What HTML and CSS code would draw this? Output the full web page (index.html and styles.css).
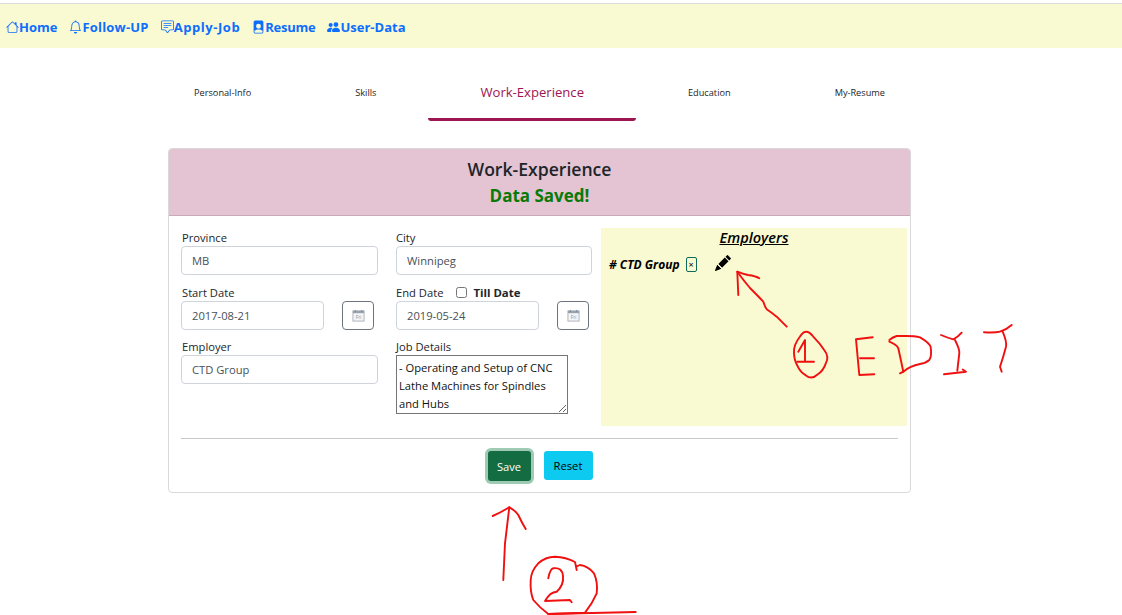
FILE: index.html
```html
<!DOCTYPE html>
<html lang="en">
<head>
<meta charset="utf-8">
<title>Work-Experience</title>
<link rel="stylesheet" href="styles.css">
</head>
<body>
<nav class="topnav">
  <a class="navlink" href="#"><svg class="navicon" viewBox="0 0 16 16"><path fill-rule="evenodd" d="M2 13.5V7h1v6.5a.5.5 0 0 0 .5.5h9a.5.5 0 0 0 .5-.5V7h1v6.5a1.5 1.5 0 0 1-1.5 1.5h-9A1.5 1.5 0 0 1 2 13.5zm11-11V6l-2-2V2.5a.5.5 0 0 1 .5-.5h1a.5.5 0 0 1 .5.5z"/><path fill-rule="evenodd" d="M7.293 1.5a1 1 0 0 1 1.414 0l6.647 6.646a.5.5 0 0 1-.708.708L8 2.207 1.354 8.854a.5.5 0 1 1-.708-.708L7.293 1.5z"/></svg>Home</a>
  <a class="navlink navlink-follow" href="#"><svg class="navicon" viewBox="0 0 16 16"><path d="M8 16a2 2 0 0 0 2-2H6a2 2 0 0 0 2 2zM8 1.918l-.797.161A4.002 4.002 0 0 0 4 6c0 .628-.134 2.197-.459 3.742-.16.767-.376 1.566-.663 2.258h10.244c-.287-.692-.502-1.49-.663-2.258C12.134 8.197 12 6.628 12 6a4.002 4.002 0 0 0-3.203-3.92L8 1.917zM14.22 12c.223.447.481.801.78 1H1c.299-.199.557-.553.78-1C2.68 10.2 3 6.88 3 6c0-2.42 1.72-4.44 4.005-4.901a1 1 0 1 1 1.99 0A5.002 5.002 0 0 1 13 6c0 .88.32 4.2 1.22 6z"/></svg>Follow-UP</a>
  <a class="navlink navlink-apply" href="#"><svg class="navicon" viewBox="0 0 16 16"><path d="M14 1a1 1 0 0 1 1 1v8a1 1 0 0 1-1 1h-2.5a2 2 0 0 0-1.6.8L8 14.333 6.1 11.8a2 2 0 0 0-1.6-.8H2a1 1 0 0 1-1-1V2a1 1 0 0 1 1-1h12zM2 0a2 2 0 0 0-2 2v8a2 2 0 0 0 2 2h2.5a1 1 0 0 1 .8.4l1.9 2.533a1 1 0 0 0 1.6 0l1.9-2.533a1 1 0 0 1 .8-.4H14a2 2 0 0 0 2-2V2a2 2 0 0 0-2-2H2z"/><path d="M3 3.5a.5.5 0 0 1 .5-.5h9a.5.5 0 0 1 0 1h-9a.5.5 0 0 1-.5-.5zM3 6a.5.5 0 0 1 .5-.5h9a.5.5 0 0 1 0 1h-9A.5.5 0 0 1 3 6zm0 2.5a.5.5 0 0 1 .5-.5h5a.5.5 0 0 1 0 1h-5a.5.5 0 0 1-.5-.5z"/></svg>Apply-Job</a>
  <a class="navlink navlink-resume" href="#"><svg class="navicon" viewBox="0 0 16 16"><path d="M12 0H4a2 2 0 0 0-2 2v12a2 2 0 0 0 2 2h8a2 2 0 0 0 2-2V2a2 2 0 0 0-2-2zm-1 7a3 3 0 1 1-6 0 3 3 0 0 1 6 0zm-3 4c2.623 0 4.146.826 5 1.755V14a1 1 0 0 1-1 1H4a1 1 0 0 1-1-1v-1.245C3.854 11.825 5.377 11 8 11z"/></svg>Resume</a>
  <a class="navlink" href="#"><svg class="navicon" viewBox="0 0 16 16"><path d="M7 14s-1 0-1-1 1-4 5-4 5 3 5 4-1 1-1 1H7zm4-6a3 3 0 1 0 0-6 3 3 0 0 0 0 6z"/><path d="M5.216 14A2.238 2.238 0 0 1 5 13c0-1.355.68-2.75 1.936-3.72A6.325 6.325 0 0 0 5 9c-4 0-5 3-5 4s1 1 1 1h4.216z"/><path d="M4.5 8a2.5 2.5 0 1 0 0-5 2.5 2.5 0 0 0 0 5z"/></svg>User-Data</a>
</nav>

<main class="page">
  <div class="tabs">
    <a class="tab" href="#">Personal-Info</a>
    <a class="tab" href="#">Skills</a>
    <a class="tab tab-active" href="#">Work-Experience</a>
    <a class="tab" href="#">Education</a>
    <a class="tab" href="#">My-Resume</a>
  </div>

  <section class="card">
    <header class="card-head">
      <h2 class="card-title">Work-Experience</h2>
      <p class="card-status">Data Saved!</p>
    </header>
    <div class="card-body">
      <div class="form-grid">
        <div class="fields">
          <div class="field">
            <label class="label">Province</label>
            <input class="input" value="MB">
          </div>
          <div class="field field-right">
            <label class="label">City</label>
            <input class="input" value="Winnipeg">
          </div>
          <div class="field">
            <label class="label">Start Date</label>
            <div class="date-row">
              <input class="input input-date" value="2017-08-21">
              <button class="cal-btn" type="button"><svg class="cal-icon" viewBox="0 0 14 14"><rect x="1" y="2" width="12" height="11" fill="#f4f5f7" stroke="#aab2bb"/><rect x="1" y="2" width="12" height="2.5" fill="#98a2ae"/><rect x="3" y="1" width="1" height="2" fill="#7b8693"/><rect x="10" y="1" width="1" height="2" fill="#7b8693"/><text class="cal-text" x="7" y="10.8" text-anchor="middle">Fri</text></svg></button>
            </div>
          </div>
          <div class="field field-right">
            <div class="label-row">
              <label class="label">End Date</label>
              <input class="check" type="checkbox">
              <strong class="till">Till Date</strong>
            </div>
            <div class="date-row">
              <input class="input input-date" value="2019-05-24">
              <button class="cal-btn" type="button"><svg class="cal-icon" viewBox="0 0 14 14"><rect x="1" y="2" width="12" height="11" fill="#f4f5f7" stroke="#aab2bb"/><rect x="1" y="2" width="12" height="2.5" fill="#98a2ae"/><rect x="3" y="1" width="1" height="2" fill="#7b8693"/><rect x="10" y="1" width="1" height="2" fill="#7b8693"/><text class="cal-text" x="7" y="10.8" text-anchor="middle">Fri</text></svg></button>
            </div>
          </div>
          <div class="field">
            <label class="label">Employer</label>
            <input class="input" value="CTD Group">
          </div>
          <div class="field field-right">
            <label class="label">Job Details</label>
            <textarea class="details">- Operating and Setup of CNC Lathe Machines for Spindles and Hubs</textarea>
          </div>
        </div>
        <aside class="employers">
          <h3 class="employers-title">Employers</h3>
          <div class="employer">
            <span class="employer-name"># CTD Group</span>
            <span class="remove">×</span>
            <svg class="pencil" viewBox="0 0 16 16"><path d="M12.854.146a.5.5 0 0 0-.707 0L10.5 1.793 14.207 5.5l1.647-1.646a.5.5 0 0 0 0-.708l-3-3zm.646 6.061L9.793 2.5 3.293 9H3.5a.5.5 0 0 1 .5.5v.5h.5a.5.5 0 0 1 .5.5v.5h.5a.5.5 0 0 1 .5.5v.5h.5a.5.5 0 0 1 .5.5v.207l6.5-6.5zm-7.468 7.468A.5.5 0 0 1 6 13.5V13h-.5a.5.5 0 0 1-.5-.5V12h-.5a.5.5 0 0 1-.5-.5V11h-.5a.5.5 0 0 1-.5-.5V10h-.5a.499.499 0 0 1-.175-.032l-.179.178a.5.5 0 0 0-.11.168l-2 5a.5.5 0 0 0 .65.65l5-2a.5.5 0 0 0 .168-.11l.178-.178z"/></svg>
          </div>
        </aside>
      </div>
      <hr class="rule">
      <div class="actions">
        <button class="btn btn-save" type="button">Save</button>
        <button class="btn btn-reset" type="button">Reset</button>
      </div>
    </div>
  </section>
</main>

<svg class="ink" viewBox="0 0 1122 615">
  <path d="M738.3,295 L737.3,271.7 Q743,274 748,275 Q756,276 759.3,278.3"/>
  <path d="M737.3,271.7 Q744,281 750,288 Q758,296 763.3,301.7 Q765,307 766.7,309.3 Q772,313 776.7,316.7 L786.7,326.7"/>
  <path d="M813,336.3 Q820,343.3 824.2,350 Q829.5,356.7 825.8,363.4 Q823.3,371 817.5,374.5 Q811.7,380 805.9,375.4 Q800,372 797.5,365.9 Q794,360 794,352.5 Q793.5,345 800,336.5 Q806,327 813,336.3"/>
  <path d="M798.3,351.7 L805,340 L805,361"/>
  <path d="M797.3,361.7 L814,361.7"/>
  <path d="M872.7,337.3 L856,339.3 L859.3,375 L874.3,374.3"/>
  <path d="M860,358.3 L874,358.3"/>
  <path d="M889.3,340 Q893,337 896.7,336 L906,336 Q915,336 920,337.3 Q930,343 930.7,347.3 Q932,356 929.3,360 Q926,363 920,364 Q910,366 903.3,371.7 L900,373.3"/>
  <path d="M889.3,341.7 Q897,345 898.3,348.3 Q900,356 903.3,371.7"/>
  <path d="M941,335 Q948,338 953.3,339.3 Q958,337 961.7,332.7"/>
  <path d="M955,340 Q960,350 959.3,353.3 L957.3,370.7"/>
  <path d="M944,374.3 L966,371.7 L962.7,369.5"/>
  <path d="M984,332.3 Q995,333 1000,331.7 Q1006,330 1011.7,325"/>
  <path d="M1002.7,331.7 Q1007,342 1006,346.7 Q1003,358 1000,366.7 L1001.7,371.7"/>
  <path d="M503.3,580 L505,543.3 L509.3,507.3"/>
  <path d="M492.7,516 Q500,513 509.3,507.3 Q516,511 518.3,515 Q522,523 525.7,529"/>
  <path d="M576.7,570 L575,562 Q566,557 555,556.7 Q545,557 538.3,563.3 Q531,571 530.7,580 Q530,592 533.3,600 Q540,608 548.3,614 L585,612.7 Q592,604 596.7,593.3 Q598,582 594,573.3 Q588,566 580,565 L576,566.7"/>
  <path d="M548.3,578.3 Q550,569 553.3,568.3 Q562,567 563,576 Q564,585 556.7,591.7 Q550,592 545,601 L570,600 L571.7,602.3"/>
  <path d="M548.3,614 L635.7,612"/>
</svg>
</body>
</html>
```
FILE: styles.css
```css
* { box-sizing: border-box; }

html, body {
  margin: 0;
  height: 615px;
  overflow: hidden;
}

body {
  position: relative;
  background: #fff;
  color: #212529;
  font-family: "Open Sans", "Noto Sans", sans-serif;
  font-size: 12px;
  padding-top: 3px;
}

.topnav {
  display: flex;
  align-items: center;
  gap: 12px;
  height: 45px;
  padding: 2px 0 0 6px;
  background: #f9f9d2;
  border-top: 1px solid #dcdcdc;
}

.navlink {
  display: flex;
  align-items: center;
  color: #0d6efd;
  font-size: 13px;
  font-weight: 700;
  text-decoration: none;
}

.navlink-follow { letter-spacing: 0.2px; }
.navlink-apply { letter-spacing: 0.55px; }
.navlink-resume { letter-spacing: -0.25px; }

.navicon {
  width: 13px;
  height: 14px;
  fill: currentColor;
  flex: none;
}

.page {
  width: 1079px;
  display: flex;
  flex-direction: column;
  align-items: center;
}

.tabs {
  display: flex;
  height: 73px;
}

.tab {
  display: flex;
  align-items: center;
  justify-content: center;
  padding: 34px 52px 19px;
  height: 73px;
  color: #212529;
  font-size: 9.2px;
  text-decoration: none;
}

.tab-active {
  padding-top: 36px;
  color: #9c1450;
  font-size: 13.1px;
  border-bottom: 3px solid #9c1450;
  border-radius: 0 0 3px 3px;
}

.card {
  width: 743px;
  height: 345px;
  margin-top: 27px;
  border: 1px solid #d9d9d9;
  border-radius: 4px;
  overflow: hidden;
}

.card-head {
  height: 67px;
  padding-top: 8px;
  background: #e4c4d3;
  border-bottom: 1px solid #c9aaba;
  text-align: center;
}

.card-title {
  margin: 0;
  font-size: 17.6px;
  line-height: 24px;
  font-weight: 600;
}

.card-status {
  margin: 3px 0 0;
  color: #087a08;
  font-size: 17px;
  line-height: 24px;
  font-weight: 700;
}

.card-body {
  padding: 12px 12px 0;
}

.form-grid {
  display: flex;
}

.fields {
  flex: none;
  width: 420px;
  padding-top: 1px;
  display: grid;
  grid-template-columns: 197px 196px;
  column-gap: 18px;
  grid-template-rows: 55px 54px 60px;
  align-content: start;
}

.field {
  display: flex;
  flex-direction: column;
}

.label {
  display: block;
  height: 17px;
  padding-left: 1px;
  font-size: 11.2px;
  line-height: 17px;
}

.field-right .label {
  padding-left: 0;
}

.label-row {
  display: flex;
  align-items: center;
  height: 17px;
}

.check {
  width: 11px;
  height: 11px;
  margin: 0 6px 0 13px;
}

.till {
  font-size: 11.4px;
  font-weight: 700;
}

.input {
  display: block;
  width: 100%;
  height: 29px;
  padding: 0 10px;
  border: 1px solid #ced4da;
  border-radius: 4px;
  background: #fff;
  color: #495057;
  font: 11.2px "Open Sans", "Noto Sans", sans-serif;
}

.date-row {
  display: flex;
  gap: 18px;
}

.input-date {
  width: 143px;
  flex: none;
}

.cal-btn {
  display: flex;
  align-items: center;
  justify-content: center;
  flex: none;
  width: 32px;
  height: 29px;
  padding: 0;
  border: 1px solid #6c757d;
  border-radius: 4px;
  background: #fff;
}

.cal-icon {
  width: 13px;
  height: 13px;
}

.cal-text {
  font-size: 5px;
  fill: #8d97a3;
}

.details {
  display: block;
  flex: none;
  width: 172px;
  height: 59px;
  padding: 3px 2px 0;
  border: 1px solid #767676;
  background: #fff;
  color: #111;
  font: 11.2px/18px "Open Sans", "Noto Sans", sans-serif;
  overflow: hidden;
}

.employers {
  flex: none;
  width: 306px;
  height: 198px;
  padding: 0 8px;
  background: #f9f9d2;
  color: #000;
}

.employers-title {
  margin: 0;
  text-align: center;
  font-size: 14.6px;
  line-height: 19px;
  font-weight: 600;
  font-style: italic;
  text-decoration: underline;
}

.employer {
  display: flex;
  align-items: center;
  margin-top: 7px;
  height: 20px;
}

.employer-name {
  font-size: 12px;
  font-weight: 700;
  font-style: italic;
}

.remove {
  display: flex;
  align-items: center;
  justify-content: center;
  flex: none;
  width: 11px;
  height: 15px;
  margin-left: 6px;
  border: 1px solid #0d6b57;
  border-radius: 2px;
  font-size: 9px;
  line-height: 1;
}

.pencil {
  flex: none;
  width: 16px;
  height: 16px;
  margin-left: 18px;
  margin-top: -3px;
  fill: #000;
}

.rule {
  margin: 12px 0 0;
  border: 0;
  border-top: 1px solid #c8c8c8;
}

.actions {
  display: flex;
  justify-content: center;
  gap: 13px;
  margin-top: 12px;
  padding-left: 1px;
}

.btn {
  height: 29px;
  padding: 0;
  border: 0;
  border-radius: 3px;
  font: 11.2px "Open Sans", "Noto Sans", sans-serif;
}

.btn-save {
  width: 43px;
  height: 30px;
  background: #146c43;
  color: #fff;
  box-shadow: 0 0 0 3px #9fcbb5;
}

.btn-reset {
  width: 49px;
  background: #0dcaf0;
  color: #000;
}

.ink {
  position: absolute;
  left: 0;
  top: 0;
  width: 1122px;
  height: 615px;
  pointer-events: none;
  fill: none;
  stroke: #f01010;
  stroke-width: 1.9;
  stroke-linecap: round;
  stroke-linejoin: round;
}
```
